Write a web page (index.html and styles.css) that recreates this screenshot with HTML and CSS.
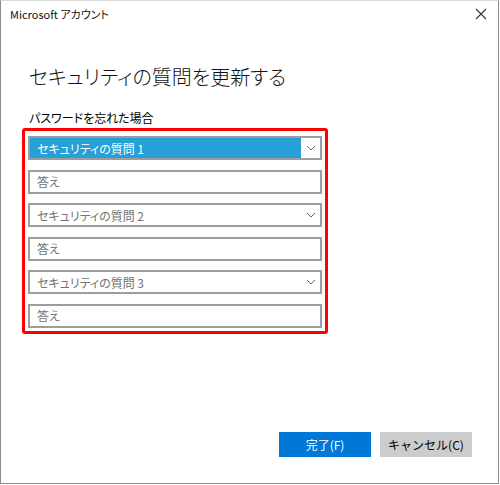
FILE: index.html
```html
<!DOCTYPE html>
<html lang="ja">
<head>
  <meta charset="UTF-8">
  <title>Microsoft アカウント</title>
  <link rel="stylesheet" href="styles.css">
</head>
<body>

<div class="window">
  <div class="titlebar">
    <span class="app-name">Microsoft アカウント</span>
    <svg class="close" width="12" height="12" viewBox="0 0 12 12">
      <path d="M1 1 L11 11 M11 1 L1 11" stroke="#333" stroke-width="1.1" fill="none"/>
    </svg>
  </div>

  <div class="content">
    <div class="heading">セキュリティの質問を更新する</div>
    <div class="label">パスワードを忘れた場合</div>

    <div class="marked">
      <div class="field select active">
        <span class="value">セキュリティの質問 1</span>
        <span class="chevron"><svg width="10" height="6" viewBox="0 0 10 6"><path d="M1 1 L5 5 L9 1" stroke="#666" stroke-width="1" fill="none"/></svg></span>
      </div>
      <div class="field"><span class="value">答え</span></div>

      <div class="field select">
        <span class="value">セキュリティの質問 2</span>
        <span class="chevron"><svg width="10" height="6" viewBox="0 0 10 6"><path d="M1 1 L5 5 L9 1" stroke="#666" stroke-width="1" fill="none"/></svg></span>
      </div>
      <div class="field"><span class="value">答え</span></div>

      <div class="field select">
        <span class="value">セキュリティの質問 3</span>
        <span class="chevron"><svg width="10" height="6" viewBox="0 0 10 6"><path d="M1 1 L5 5 L9 1" stroke="#666" stroke-width="1" fill="none"/></svg></span>
      </div>
      <div class="field"><span class="value">答え</span></div>
    </div>
  </div>

  <div class="footer">
    <button class="btn primary">完了(F)</button>
    <button class="btn">キャンセル(C)</button>
  </div>
</div>

</body>
</html>
```

FILE: styles.css
```css
html, body {
  margin: 0;
  padding: 0;
  background: #fff;
}
body {
  font-family: "Noto Sans CJK JP", "Noto Sans", sans-serif;
  font-feature-settings: "palt";
  color: #000;
}
.window {
  box-sizing: border-box;
  width: 499px;
  height: 484px;
  border: 1px solid #8c8c8c;
  border-top-color: #d9d9d9;
  display: flex;
  flex-direction: column;
}
.titlebar {
  height: 26px;
  display: flex;
  align-items: center;
  justify-content: space-between;
  padding: 0 6px 0 9px;
}
.app-name {
  font-size: 11px;
  color: #111;
}
.close { margin-right: 5px; }

.content {
  flex: 1;
  padding: 36px 0 0 21px;
}
.heading {
  font-size: 20px;
  font-weight: 300;
  line-height: 28px;
  margin-left: 7px;
  color: #111;
}
.label {
  font-size: 12px;
  line-height: 16px;
  margin: 19px 0 0 7px;
}
.marked {
  width: 294px;
  border: 3px solid #f00;
  border-radius: 3px;
  padding: 5px 3px 3px 3px;
  margin-top: 2px;
  display: flex;
  flex-direction: column;
  gap: 9.6px;
}
.field {
  box-sizing: border-box;
  height: 24px;
  border: 2px solid #9d9d9d;
  display: flex;
  align-items: stretch;
}
.field .value {
  flex: 1;
  display: flex;
  align-items: center;
  padding-left: 7px;
  font-size: 12px;
  color: #737373;
}
.chevron {
  width: 19px;
  display: flex;
  align-items: center;
  justify-content: center;
  background: #fff;
}
.active .value {
  background: #27a0d9;
  color: #fff;
}

.footer {
  display: flex;
  justify-content: flex-end;
  gap: 9px;
  padding: 0 26px 26px 0;
}
.btn {
  width: 92px;
  height: 25px;
  border: 1px solid #ccc;
  background: #ccc;
  font-family: inherit;
  font-size: 12px;
  color: #000;
  padding: 0;
}
.btn.primary {
  background: #0078d7;
  border-color: #0078d7;
  color: #fff;
}
```
